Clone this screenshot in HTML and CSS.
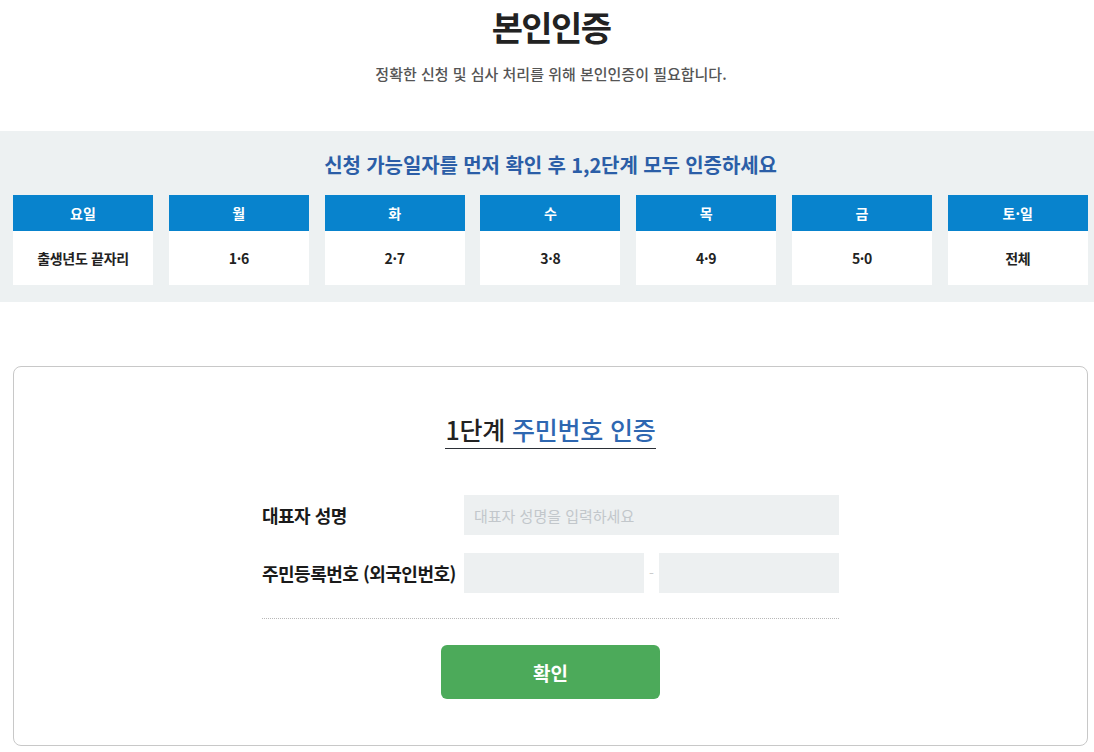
FILE: index.html
```html
<!DOCTYPE html>
<html lang="ko">
<head>
<meta charset="utf-8">
<title>본인인증</title>
<link rel="stylesheet" href="styles.css">
</head>
<body>
<header class="top">
  <h1 class="title">본인인증</h1>
  <p class="subtitle">정확한 신청 및 심사 처리를 위해 본인인증이 필요합니다.</p>
</header>
<section class="notice">
  <h2 class="notice-title">신청 가능일자를 먼저 확인 후 1,2단계 모두 인증하세요</h2>
  <div class="days">
    <div class="day"><div class="day-head">요일</div><div class="day-body">출생년도 끝자리</div></div>
    <div class="day"><div class="day-head">월</div><div class="day-body">1·6</div></div>
    <div class="day"><div class="day-head">화</div><div class="day-body">2·7</div></div>
    <div class="day"><div class="day-head">수</div><div class="day-body">3·8</div></div>
    <div class="day"><div class="day-head">목</div><div class="day-body">4·9</div></div>
    <div class="day"><div class="day-head">금</div><div class="day-body">5·0</div></div>
    <div class="day"><div class="day-head">토·일</div><div class="day-body">전체</div></div>
  </div>
</section>
<section class="card">
  <h3 class="step"><span class="step-text">1단계 <span class="step-blue">주민번호 인증</span></span></h3>
  <form class="form">
    <div class="row">
      <label class="label">대표자 성명</label>
      <input class="input wide" type="text" placeholder="대표자 성명을 입력하세요">
    </div>
    <div class="row">
      <label class="label">주민등록번호 (외국인번호)</label>
      <div class="pair">
        <input class="input half" type="text">
        <span class="dash">-</span>
        <input class="input half" type="password">
      </div>
    </div>
    <div class="divider"></div>
    <div class="actions"><button class="btn" type="button">확인</button></div>
  </form>
</section>
</body>
</html>
```
FILE: styles.css
```css
* { box-sizing: border-box; }
html, body { margin: 0; padding: 0; background: #fff; }
body {
  font-family: "Noto Sans CJK KR", "Noto Sans", sans-serif;
  color: #222;
}
.top { text-align: center; padding: 4px 0 0 8px; }
.title {
  margin: 0;
  font-size: 34px;
  font-weight: 700;
  line-height: 46px;
  color: #222;
  letter-spacing: -1.6px;
}
.subtitle {
  margin: 13px 0 0;
  font-size: 15px;
  line-height: 22px;
  color: #555;
  font-weight: 500;
}
.notice {
  margin-top: 46px;
  background: #edf1f2;
  padding: 20px 6px 17px 13px;
  height: 171px;
}
.notice-title {
  margin: 0;
  text-align: center;
  font-size: 20px;
  line-height: 28px;
  font-weight: 700;
  color: #2b5ea7;
  letter-spacing: -0.1px;
}
.days {
  margin-top: 16px;
  display: grid;
  grid-template-columns: repeat(7, 140px);
  column-gap: 15.8px;
}
.day-head {
  height: 36px;
  background: #0883cd;
  color: #fff;
  font-size: 14px;
  font-weight: 700;
  display: flex; align-items: center; justify-content: center;
}
.day-body {
  height: 54px;
  background: #fff;
  color: #222;
  font-size: 14px;
  font-weight: 700;
  display: flex; align-items: center; justify-content: center;
  letter-spacing: -0.3px;
}
.card {
  margin: 64px 6px 0 13px;
  border: 1px solid #c8c8c8;
  border-radius: 8px;
  height: 380px;
  padding-top: 45px;
}
.step {
  margin: 0;
  text-align: center;
  font-size: 25px;
  font-weight: 500;
  line-height: 34px;
}
.step-text {
  display: inline-block;
  border-bottom: 1px solid #2b2f36;
  padding-bottom: 2px;
  color: #222;
  letter-spacing: -0.2px;
}
.step-blue { color: #2e67b1; }
.form {
  width: 577px;
  margin: 46px auto 0;
}
.row {
  display: flex;
  align-items: center;
  margin-bottom: 18px;
}
.label {
  width: 202px;
  font-size: 18px;
  font-weight: 700;
  letter-spacing: -0.5px;
  color: #1a1a1a;
}
.input {
  height: 40px;
  border: 0;
  background: #edf0f1;
  font-family: inherit;
  font-size: 15px;
  padding: 0 10px;
  outline: none;
}
.input::placeholder { color: #c2c7cb; }
.wide { width: 375px; }
.pair { display: flex; align-items: center; }
.half { width: 180px; }
.dash { width: 15px; text-align: center; color: #ccc; font-size: 14px; }
.divider {
  margin-top: 25px;
  border-top: 1px dotted #b8b8b8;
}
.actions { display: flex; justify-content: center; margin-top: 26px; }
.btn {
  width: 219px;
  height: 54px;
  border: 0;
  border-radius: 6px;
  background: #4caa5a;
  color: #fff;
  font-family: inherit;
  font-size: 19px;
  font-weight: 700;
}
```
